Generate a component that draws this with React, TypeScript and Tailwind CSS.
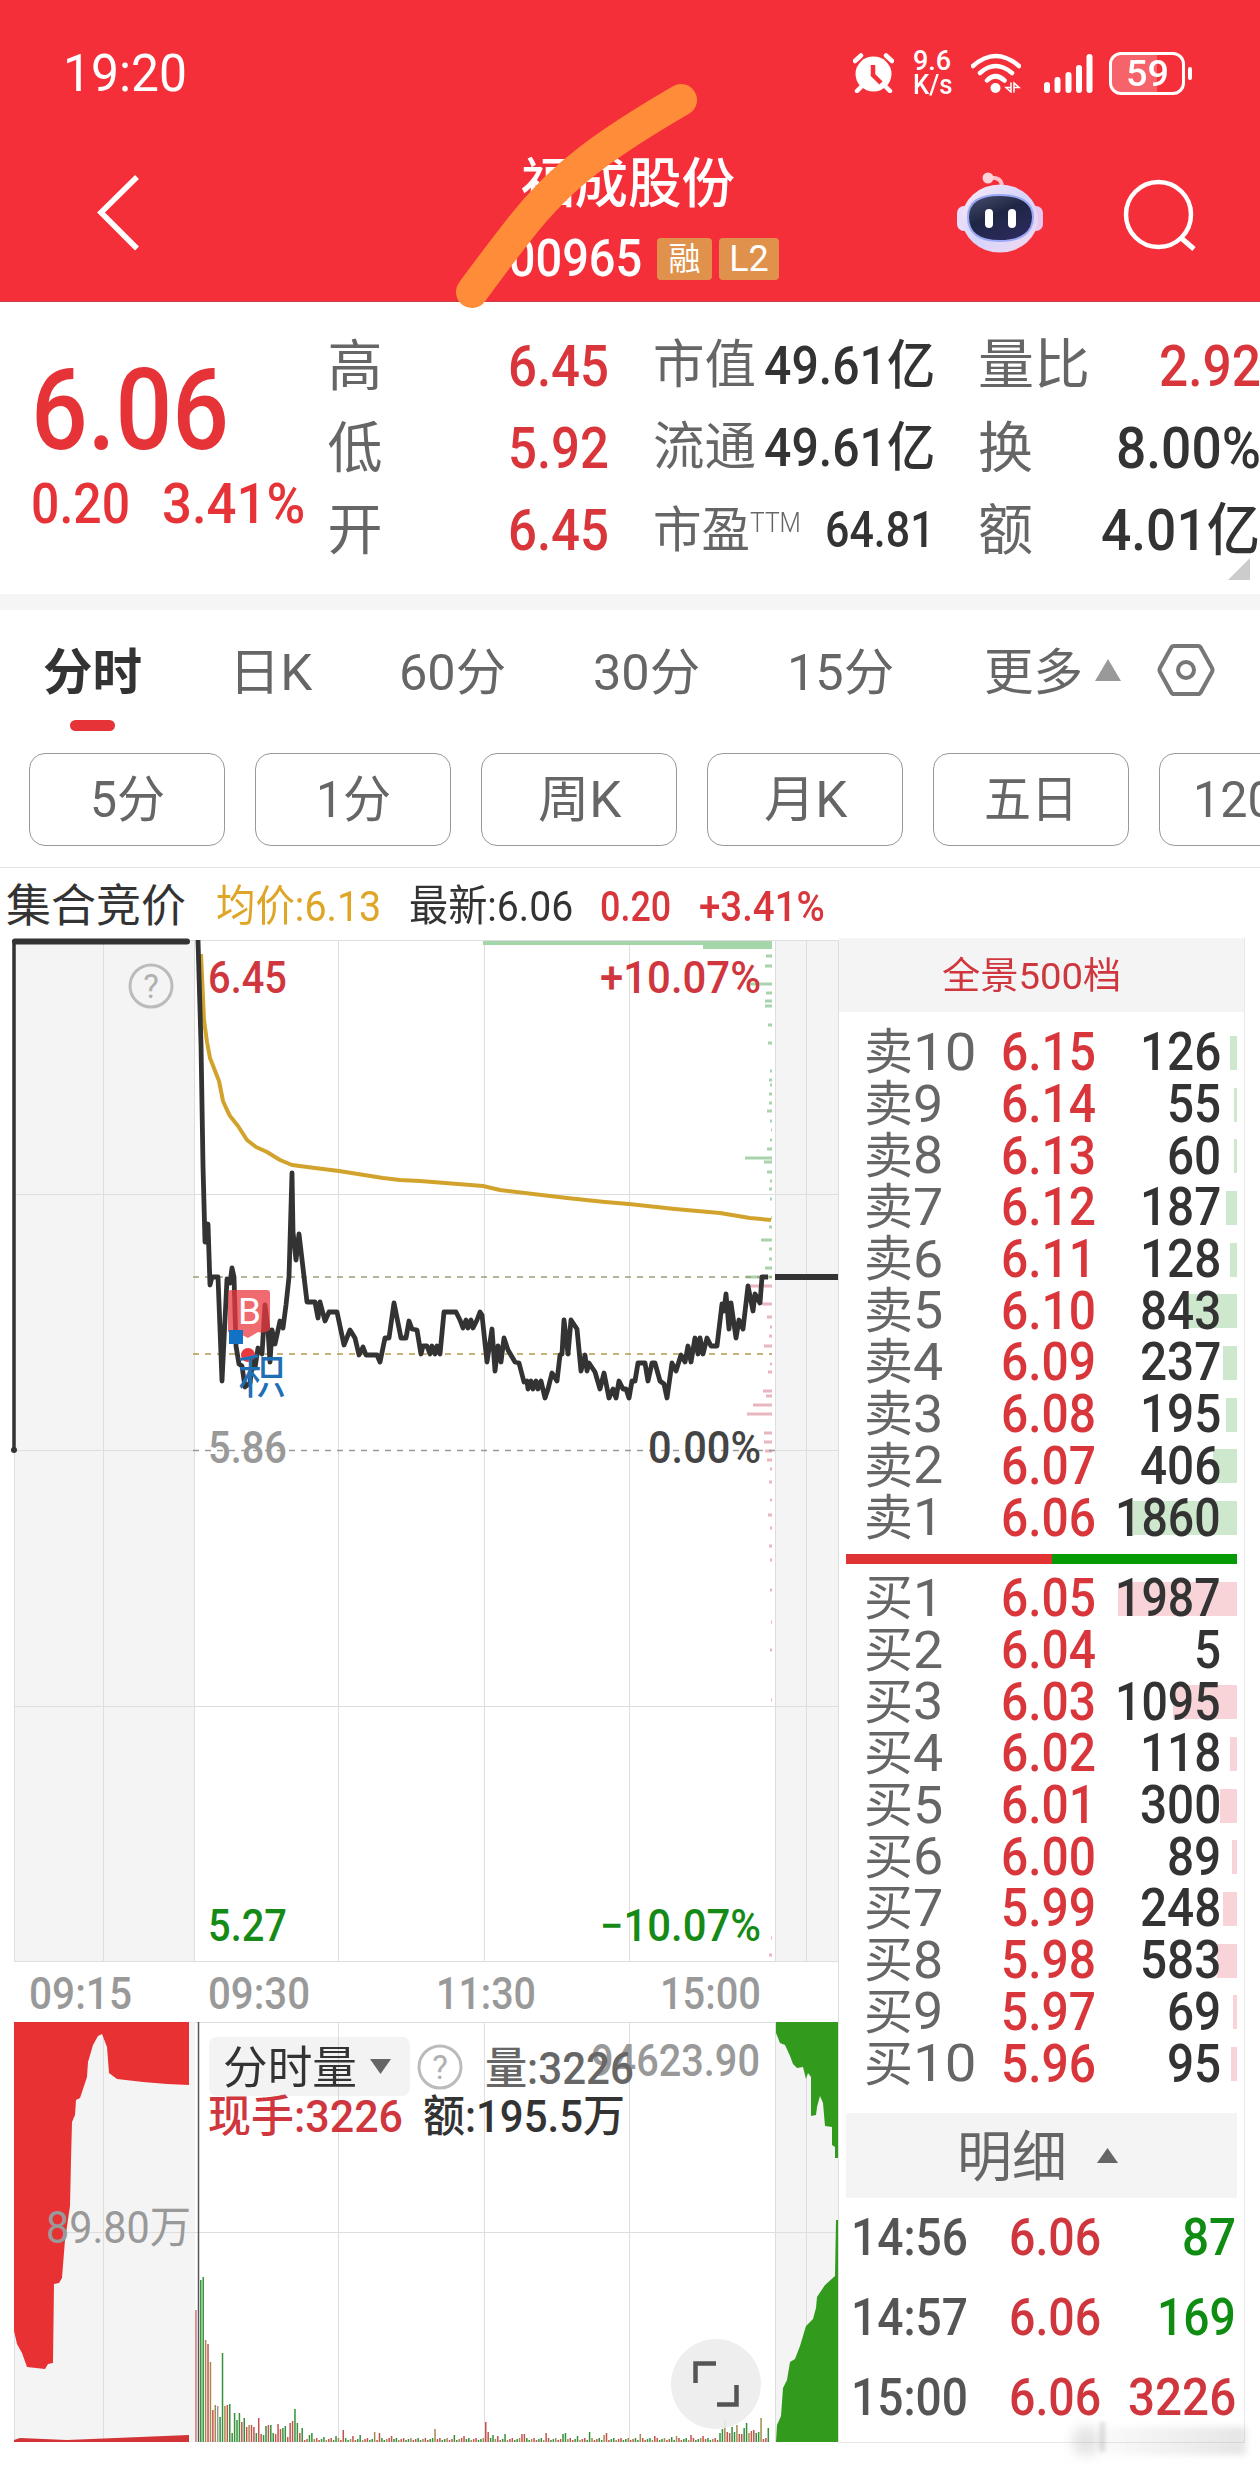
import React, { useLayoutEffect, useRef, useState } from 'react';

// Squeezes a single line of text horizontally so that it fills its box.
function Fit({ className = '', children }: { className?: string; children: React.ReactNode }) {
  const box = useRef<HTMLDivElement>(null);
  const inner = useRef<HTMLSpanElement>(null);
  const [scale, setScale] = useState(1);

  useLayoutEffect(() => {
    if (box.current && inner.current) {
      setScale(box.current.clientWidth / inner.current.offsetWidth);
    }
  }, [children]);

  return (
    <div ref={box} className={`shrink-0 whitespace-nowrap ${className}`}>
      <span ref={inner} className="inline-block origin-left" style={{ transform: `scaleX(${scale})` }}>
        {children}
      </span>
    </div>
  );
}

function StatusBar() {
  return (
    <div className="flex h-[146px] items-center pl-[63px]">
      <Fit className="w-[124px] text-[51px] leading-none">19:20</Fit>
      <svg className="ml-[666px] h-[40px] w-[41px]" viewBox="0 0 41 40">
        <ellipse cx="20.5" cy="21" rx="18" ry="17.5" fill="#fff" />
        <path d="M20 12v10l8 8" fill="none" stroke="#f42f39" strokeWidth="4.5" />
        <path d="M2 8l6-5.500M39 8l-6-5.500M8 34l-4 4M33 34l4 4" stroke="#fff" strokeWidth="4.500" strokeLinecap="round" />
      </svg>
      <div className="ml-[19px] text-[27px] font-medium leading-[24px]">
        <Fit className="w-[38px]">9.6</Fit>
        <Fit className="w-[40px]">K/s</Fit>
      </div>
      <svg className="ml-[18px] h-[40px] w-[50px]" viewBox="0 0 50 40" fill="none" stroke="#fff" strokeWidth="4.500" strokeLinecap="round">
        <path d="M2 13Q24.500-7 48 13M9 20Q24.500 6 41 20M16 27.500Q24.500 19 33.500 27.500" />
        <circle cx="24.500" cy="35" r="5" fill="#fff" stroke="none" />
        <path d="M40 30v9l-5-4.500h5M43 39v-9l5 4.500h-5" strokeWidth="1.500" />
      </svg>
      <svg className="ml-[22px] h-[39px] w-[51px]" viewBox="0 0 51 39" stroke="#fff" strokeWidth="6" strokeLinecap="round">
        <path d="M4 31v5M14.500 26v10M25.500 21v15M36 14v22M46.500 3v33" />
      </svg>
      <div className="relative ml-[15px] flex h-[43px] w-[76px] items-center justify-center rounded-[12px] border-[3px] border-white">
        <div className="absolute inset-y-0 left-0 w-[45px] rounded-l-[9px] bg-white/25" />
        <Fit className="relative w-[43px] text-[37px] font-medium leading-none">59</Fit>
      </div>
      <div className="ml-[3px] h-[13px] w-[4px] rounded-full bg-white" />
    </div>
  );
}

function Robot() {
  return (
    <svg className="h-[82px] w-[88px]" viewBox="0 0 88 82">
      <defs>
        <linearGradient id="shell" x1="0" y1="0" x2="1" y2="1">
          <stop offset="0" stopColor="#fbe9f4" />
          <stop offset="0.5" stopColor="#d5d5fb" />
          <stop offset="1" stopColor="#f4d9ee" />
        </linearGradient>
        <linearGradient id="visor" x1="0" y1="0" x2="0.6" y2="1">
          <stop offset="0" stopColor="#4a5170" />
          <stop offset="0.5" stopColor="#1e2644" />
          <stop offset="1" stopColor="#2b2a5c" />
        </linearGradient>
      </defs>
      <path d="M32 6q14-2 14 9" fill="none" stroke="#ffc0cb" strokeWidth="4" />
      <circle cx="32" cy="6" r="5.500" fill="#ffd3da" />
      <rect x="1" y="34" width="14" height="25" rx="7" fill="#e9dcfa" />
      <rect x="73" y="34" width="14" height="25" rx="7" fill="#e9c6ee" />
      <ellipse cx="44" cy="46.500" rx="38" ry="34" fill="url(#shell)" />
      <path d="M12 45C12 30 24 23 44 23S77 30 77 45 66 69 44 69 12 60 12 45Z" fill="url(#visor)" stroke="#9aa8f5" strokeWidth="2" />
      <path d="M33 41v11M56 41v11" stroke="#fff" strokeWidth="8" strokeLinecap="round" />
    </svg>
  );
}

function Header() {
  return (
    <header className="relative h-[302px] border-b border-[#c9404a] bg-[#f42f39] text-white">
      <StatusBar />
      <div className="flex h-[155px] items-start pl-[96px]">
        <svg className="mt-[27px] h-[80px] w-[46px]" viewBox="0 0 46 80">
          <path d="M41 4L5 39.500l36 36" fill="none" stroke="#fff" strokeWidth="5.500" />
        </svg>
        <div className="ml-[342px] w-[296px]">
          <Fit className="ml-[37px] mt-[9px] w-[214px] text-[54px] font-medium leading-[60px]">福成股份</Fit>
          <div className="mt-[18px] flex items-center">
            <Fit className="-ml-[2px] w-[160px] text-[52px] font-medium leading-[52px]">600965</Fit>
            <div className="ml-[15px] flex h-[42px] w-[55px] items-center justify-center rounded-[4px] bg-[#e0924d] text-[32px] leading-none">融</div>
            <div className="ml-[7px] flex h-[42px] w-[60px] items-center justify-center rounded-[4px] bg-[#e0924d] text-[36px] leading-none">L2</div>
          </div>
        </div>
        <div className="ml-[176px] mt-[26px]">
          <Robot />
        </div>
        <svg className="ml-[78px] mt-[31px] h-[76px] w-[76px]" viewBox="0 0 76 76" fill="none" stroke="#fff" strokeWidth="4.500">
          <ellipse cx="36.500" cy="37.500" rx="32.500" ry="32.500" />
          <path d="M58 60l14 12" strokeWidth="5" />
        </svg>
      </div>
      <svg className="absolute left-[440px] top-[70px] h-[250px] w-[280px]" viewBox="440 70 280 250">
        <path d="M472 292C488 270 500 254 518 231C538 205 562 180 590 159C620 136 650 118 681 100" fill="none" stroke="#ff8c38" strokeWidth="32" strokeLinecap="round" />
      </svg>
    </header>
  );
}

function Quote() {
  return (
    <section className="relative flex h-[292px] text-[#333]">
      <div className="w-[328px] pl-[31px] pt-[55px] font-medium text-[#e53338]">
        <Fit className="w-[198px] text-[113px] leading-[108px]">6.06</Fit>
        <div className="mt-[11px] flex text-[56px] leading-[56px]">
          <Fit className="w-[99px]">0.20</Fit>
          <Fit className="ml-[32px] w-[143px]">3.41%</Fit>
        </div>
      </div>
      <div className="w-[282px] pt-[23px]">
        {[['高', '6.45'], ['低', '5.92'], ['开', '6.45']].map(([label, value]) => (
          <div key={label} className="flex h-[82px] items-center justify-between">
            <span className="text-[55px] leading-none text-[#666]">{label}</span>
            <Fit className="w-[101px] text-[57px] font-medium leading-none text-[#d9363c]">{value}</Fit>
          </div>
        ))}
      </div>
      <div className="ml-[44px] w-[282px] pt-[23px]">
        {[['市值', '49.61亿'], ['流通', '49.61亿']].map(([label, value]) => (
          <div key={label} className="flex h-[82px] items-center justify-between">
            <Fit className="w-[103px] text-[52px] leading-none text-[#666]">{label}</Fit>
            <Fit className="w-[171px] text-[53px] font-medium leading-none">{value}</Fit>
          </div>
        ))}
        <div className="flex h-[82px] items-center">
          <Fit className="w-[97px] text-[49px] leading-none text-[#666]">市盈</Fit>
          <Fit className="-mt-[14px] w-[51px] text-[27px] font-light leading-none text-[#666]">TTM</Fit>
          <Fit className="ml-[24px] w-[110px] text-[50px] font-medium leading-none">64.81</Fit>
        </div>
      </div>
      <div className="ml-[43px] w-[282px] pt-[23px]">
        <div className="flex h-[82px] items-center">
          <Fit className="w-[112px] text-[54px] leading-none text-[#666]">量比</Fit>
          <Fit className="ml-[69px] w-[102px] text-[57px] font-medium leading-none text-[#d9363c]">2.92</Fit>
        </div>
        <div className="flex h-[82px] items-center">
          <Fit className="w-[55px] text-[55px] leading-none text-[#666]">换</Fit>
          <Fit className="ml-[83px] w-[145px] text-[57px] font-medium leading-none">8.00%</Fit>
        </div>
        <div className="flex h-[82px] items-center">
          <Fit className="w-[55px] text-[55px] leading-none text-[#666]">额</Fit>
          <Fit className="ml-[68px] w-[159px] text-[57px] font-medium leading-none">4.01亿</Fit>
        </div>
      </div>
      <svg className="absolute right-[10px] top-[256px] h-[22px] w-[22px]" viewBox="0 0 22 22">
        <path d="M22 0v22H0z" fill="#ccc" />
      </svg>
    </section>
  );
}

const tabs = [
  { name: '日K', box: 'ml-[87px] w-[83px]' },
  { name: '60分', box: 'ml-[87px] w-[107px]' },
  { name: '30分', box: 'ml-[87px] w-[107px]' },
  { name: '15分', box: 'ml-[87px] w-[107px]' },
  { name: '更多', box: 'ml-[90px] w-[99px]' },
];

const periods = [
  { name: '5分', box: 'w-[75px]' },
  { name: '1分', box: 'w-[75px]' },
  { name: '周K', box: 'w-[83px]' },
  { name: '月K', box: 'w-[83px]' },
  { name: '五日', box: 'w-[94px]' },
];

function Tabs() {
  return (
    <nav className="h-[258px] border-b border-[#e3e3e3] text-[#666]">
      <div className="relative flex h-[122px] items-center pl-[43px] pt-[4px] text-[50px] leading-none">
        <Fit className="w-[99px] font-bold text-[#333]">分时</Fit>
        {tabs.map((tab) => (
          <Fit key={tab.name} className={tab.box}>{tab.name}</Fit>
        ))}
        <svg className="ml-[12px] h-[22px] w-[26px] -translate-y-[3px]" viewBox="0 0 26 22">
          <path d="M13 0l13 22H0z" fill="#999" />
        </svg>
        <svg className="ml-[36px] h-[54px] w-[58px] -translate-y-[3px]" viewBox="0 0 58 54" fill="none" stroke="#777" strokeWidth="4">
          <path d="M17 3h24q2 0 3 2l11 20q1 2 0 4L44 49q-1 2-3 2H17q-2 0-3-2L3 29q-1-2 0-4L14 5q1-2 3-2z" />
          <circle cx="29" cy="27" r="8" />
        </svg>
        <div className="absolute left-[70px] top-[110px] h-[11px] w-[45px] rounded-full bg-[#e53338]" />
      </div>
      <div className="mt-[21px] flex gap-[30px] pl-[29px] text-[50px] leading-none">
        {periods.map((p) => (
          <div key={p.name} className="flex h-[93px] w-[196px] shrink-0 items-center justify-center rounded-[16px] border border-[#999]">
            <Fit className={p.box}>{p.name}</Fit>
          </div>
        ))}
        <div className="flex h-[93px] w-[196px] shrink-0 items-center rounded-[16px] border border-[#999] pl-[33px]">
          <Fit className="w-[130px]">120分</Fit>
        </div>
      </div>
    </nav>
  );
}

function InfoRow() {
  return (
    <div className="flex h-[70px] items-center pl-[6px] pt-[6px] text-[43px] font-medium leading-none text-[#333]">
      <Fit className="w-[180px] text-[45px] font-normal">集合竞价</Fit>
      <Fit className="ml-[30px] w-[165px] font-normal text-[#dfa526]">均价:6.13</Fit>
      <Fit className="ml-[28px] w-[164px] font-normal">最新:6.06</Fit>
      <Fit className="ml-[27px] w-[71px] text-[#d9363c]">0.20</Fit>
      <Fit className="ml-[28px] w-[126px] text-[#d9363c]">+3.41%</Fit>
    </div>
  );
}

const price =
  '198,940 201,1044 203,1166 205,1242 208,1224 210,1285 212,1277 218,1277 222,1381 227,1279 230,1283 232,1268 234,1277 236,1346 239,1364 242,1366 245,1387 250,1383 253,1358 255,1368 258,1348 262,1354 265,1305 268,1330 270,1362 272,1330 275,1344 280,1321 283,1328 286,1305 289,1277 292,1173 293,1232 296,1260 299,1234 303,1268 307,1302 315,1302 318,1318 320,1302 325,1321 329,1312 337,1312 344,1345 350,1330 355,1338 359,1355 363,1347 366,1355 377,1355 380,1362 385,1338 389,1338 394,1303 401,1338 406,1338 409,1321 412,1329 417,1330 421,1354 423,1346 427,1346 430,1354 432,1346 435,1354 437,1346 440,1354 444,1312 456,1312 460,1320 463,1328 466,1320 468,1328 471,1320 473,1328 477,1320 480,1312 482,1315 487,1362 492,1329 495,1371 498,1346 501,1362 504,1338 508,1350 515,1362 519,1363 524,1382 527,1381 528,1389 531,1381 533,1389 536,1381 538,1389 541,1381 545,1398 548,1389 552,1373 557,1381 560,1355 562,1354 564,1320 568,1354 571,1320 577,1329 581,1371 585,1355 587,1371 589,1363 595,1372 600,1389 604,1373 609,1398 613,1389 616,1398 619,1381 623,1389 626,1389 629,1398 632,1381 635,1381 638,1363 645,1363 648,1381 652,1363 655,1363 660,1381 664,1384 667,1398 672,1363 676,1371 681,1355 685,1362 688,1346 691,1362 695,1338 698,1354 700,1338 703,1354 707,1338 711,1346 717,1346 722,1304 724,1311 726,1294 729,1329 731,1303 736,1338 739,1320 743,1329 748,1286 753,1311 755,1294 760,1303 762,1277 768,1277';

const average =
  '201,954 204,1020 207,1042 210,1058 219,1081 223,1101 227,1110 230,1116 238,1126 247,1140 256,1147 267,1152 280,1160 292,1165 315,1168 339,1171 383,1178 400,1180 420,1181 483,1186 500,1190 567,1198 605,1202 629,1204 675,1209 720,1213 750,1218 771,1220';

// [y, width] of the pending orders along the right edge
const asks = [
  [956, 6], [966, 7], [984, 24], [993, 6], [1001, 7], [1006, 7], [1025, 4], [1043, 4], [1071, 2], [1080, 3], [1085, 2],
  [1094, 3], [1103, 3], [1111, 5], [1121, 2], [1130, 1], [1140, 2], [1149, 5], [1158, 27], [1162, 8], [1172, 5],
  [1181, 2], [1189, 3], [1199, 2], [1218, 1], [1227, 3], [1240, 11], [1249, 3], [1259, 3], [1268, 7], [1277, 26],
];
const bids = [
  [1286, 22], [1304, 10], [1317, 5], [1327, 2], [1336, 3], [1346, 8], [1364, 2], [1372, 4], [1391, 9], [1396, 6],
  [1405, 19], [1414, 25], [1433, 8], [1442, 8], [1451, 7], [1460, 5], [1469, 2], [1482, 3], [1500, 2], [1515, 4],
  [1528, 2], [1546, 3], [1560, 2], [1590, 2], [1622, 1], [1650, 2], [1700, 1], [1938, 1], [1955, 3],
];

const r = '#c4534f';
const g = '#35923a';
const o = '#a58a4c';

// [height, colour] of the opening minutes
const opening: [number, string][] = [
  [132, '#c9777a'], [0, r], [162, g], [165, g], [102, o], [98, r], [80, o], [32, r], [37, o], [36, '#999'], [25, g], [89, g],
  [36, o], [37, r], [38, g], [9, g], [29, g], [22, g], [29, g], [20, r], [24, g], [15, r], [17, o], [17, r], [15, r],
  [9, g], [24, r], [8, r], [7, g], [16, g], [17, r], [17, g], [9, g], [8, r], [18, r], [13, r], [14, g], [16, g], [5, r],
  [19, r], [21, r], [33, g], [19, g], [9, r], [14, g],
];

const spikes: Record<number, number> = {
  47: 7, 48: 9, 53: 5, 58: 6, 61: 12, 65: 6, 68: 7, 74: 10, 76: 9, 81: 6, 99: 13, 107: 7, 111: 6, 120: 20, 121: 10, 123: 7,
  125: 6, 128: 8, 135: 8, 136: 8, 145: 9, 152: 8, 153: 9, 158: 6, 163: 10, 169: 7, 170: 9, 184: 8, 190: 6, 197: 5, 199: 6,
  205: 7, 210: 6, 217: 9, 218: 13, 219: 22, 220: 10, 221: 9, 222: 15, 223: 10, 224: 17, 225: 8, 226: 8, 227: 14, 228: 19,
  229: 9, 230: 11, 231: 12, 232: 9, 233: 10, 234: 24, 237: 14,
};

function volumeBar(i: number): [number, string] {
  if (i < opening.length) return opening[i];
  const height = spikes[i] ?? 2 + ((i * 7) % 3);
  return [height, [r, g, o, r, g][(i * 3) % 5]];
}

function Help({ x, y }: { x: number; y: number }) {
  return (
    <g>
      <circle cx={x} cy={y} r="21" fill="none" stroke="#bbb" strokeWidth="3" />
      <text x={x} y={y + 12} textAnchor="middle" fontSize="33" fill="#b0b0b0">?</text>
    </g>
  );
}

function Label({ x, y, w, fill, size = 44, weight = 500, children }: {
  x: number; y: number; w: number; fill: string; size?: number; weight?: number; children: string;
}) {
  return (
    <text x={x} y={y} textLength={w} lengthAdjust="spacingAndGlyphs" fontSize={size} fontWeight={weight} fill={fill}>
      {children}
    </text>
  );
}

function Chart() {
  return (
    <div className="relative h-[1536px] w-[839px] shrink-0">
      <svg className="block h-[1536px] w-[839px]" viewBox="0 938 839 1536">
        {/* panels and grid */}
        <path d="M14 940h181v1021H14zM775 940h63v1021h-63zM14 2022h181v420H14zM775 2022h63v420h-63z" fill="#f4f4f4" />
        <g stroke="#dedede" strokeWidth="1">
          <path d="M14 940.500H838M14 1194.500H838M14 1450.500H195M775 1450.500H838M14 1706.500H838M14 1961.500H838" />
          <path d="M103.500 940V1961M338.500 940V1961M484.500 940V1961M629.500 940V1961M775.500 940V1961M806.500 940V1961M838.500 940V2442M14.500 1450V1961M194.500 940V1961" />
          <path d="M195 2022.500H775M14 2232.500H838M103.500 2022V2442M338.500 2022V2442M484.500 2022V2442M629.500 2022V2442M775.500 2022V2442M806.500 2022V2442M14.500 2022V2442M838 2443H839" />
        </g>

        {/* auction session */}
        <path d="M14 1450V942H188" fill="none" stroke="#333" strokeWidth="3.500" />
        <path d="M15 941.500H187" stroke="#333" strokeWidth="6" strokeLinecap="round" />
        <circle cx="14" cy="1450" r="3" fill="#333" />
        <Help x={151} y={986} />

        {/* pending orders */}
        <path d="M483 941H772V949H703V945H483z" fill="#a3d6a8" />
        {asks.map(([y, w]) => (
          <rect key={y} x={772 - w} y={y - 1.500} width={w} height="3" fill="#a9d3ac" />
        ))}
        {bids.map(([y, w]) => (
          <rect key={y} x={772 - w} y={y - 1.500} width={w} height="3" fill="#e9b6bd" />
        ))}

        <g strokeDasharray="6 6" strokeWidth="1.500">
          <path d="M193 1277H772" stroke="#9aa07a" />
          <path d="M193 1354H772" stroke="#b39a4c" />
          <path d="M193 1450.500H775" stroke="#999" />
        </g>

        <Label x={208} y={993} w={79} fill="#cf363d">6.45</Label>
        <Label x={600} y={993} w={161} fill="#cf363d">+10.07%</Label>
        <Label x={208} y={1463} w={79} fill="#999">5.86</Label>
        <Label x={648} y={1463} w={113} fill="#444">0.00%</Label>
        <Label x={208} y={1941} w={79} fill="#168a16">5.27</Label>
        <Label x={600} y={1941} w={161} fill="#168a16">−10.07%</Label>
        <Label x={29} y={2009} w={103} fill="#999">09:15</Label>
        <Label x={208} y={2009} w={102} fill="#999">09:30</Label>
        <Label x={436} y={2009} w={100} fill="#999">11:30</Label>
        <Label x={660} y={2009} w={101} fill="#999">15:00</Label>

        <polyline points={average} fill="none" stroke="#d2a32c" strokeWidth="4" strokeLinejoin="round" />
        <polyline points={price} fill="none" stroke="#333" strokeWidth="4.800" strokeLinejoin="round" />
        <path d="M775 1277H838" stroke="#333" strokeWidth="6" />

        {/* trade markers */}
        <path d="M230 1290H267q3 0 3 3V1330q-6 4-12 2l-10 6-10-5-10-1V1293q0-3 3-3z" fill="#ea3a40" fillOpacity="0.75" />
        <path d="M240 1335l8 4 12-6v7q-13 3-16 11l-3-2z" fill="#fff" />
        <circle cx="248" cy="1355" r="7" fill="#e8393f" />
        <Label x={238} y={1324} w={23} size={37} weight={400} fill="#fff">B</Label>
        <rect x="229" y="1330" width="14" height="14" fill="#1272c6" />
        <Label x={238} y={1393} w={48} size={47} weight={400} fill="#1f6fb5">积</Label>

        {/* auction volume */}
        <path d="M14 2022H189V2085L167 2084 143 2082 117 2079 109 2073 107 2047 102 2034 98 2036 93 2045 88 2062 87 2077 80 2098 76 2100 75 2115 72 2122 71 2160 70 2206 65 2240 62 2278 59 2283 54 2284 53 2363 48 2364 45 2369 27 2367 22 2353 17 2344 14 2331z" fill="#e83132" />
        <path d="M14 2442V2440L20 2438 67 2440 189 2435V2442z" fill="#d23336" />
        <path d="M776 2022H838V2158H835V2147L832 2145V2127L825 2126 823 2103 820 2096 817 2107 816 2115 811 2116V2077L808 2073 806 2079 803 2067 797 2068 793 2064 790 2056 785 2045 780 2043 776 2033z" fill="#329b1d" />
        <path d="M836 2220H838V2442H776L777 2425 781 2416 783 2388 787 2380 790 2362 795 2359 800 2346 806 2326 813 2319 816 2308 817 2297 825 2285 835 2276z" fill="#329b1d" />
        <Label x={46} y={2243} w={145} weight={400} fill="#999">89.80万</Label>

        {/* minute volume */}
        {Array.from({ length: 238 }, (_, i) => {
          const [height, colour] = volumeBar(i);
          return <rect key={i} x={195.200 + i * 2.415} y={2442 - height} width="1.500" height={height} fill={colour} />;
        })}
        <path d="M198.500 2022V2442" stroke="#555" strokeWidth="1.500" />

        <Label x={591} y={2076} w={169} fill="#999">94623.90</Label>
        <Label x={485} y={2084} w={149} fill="#666">量:3226</Label>
        <Help x={440} y={2067} />
        <Label x={208} y={2132} w={195} fill="#cf363d">现手:3226</Label>
        <Label x={423} y={2132} w={202} fill="#333">额:195.5万</Label>
      </svg>
      <div className="absolute left-[209px] top-[1099px] flex h-[59px] w-[201px] items-center rounded-[8px] bg-[#999]/12 pl-[14px] pt-[3px] text-[#333]">
        <Fit className="w-[134px] text-[45px] leading-none">分时量</Fit>
        <svg className="ml-[13px] h-[15px] w-[21px] -translate-y-[2px]" viewBox="0 0 21 15">
          <path d="M0 0h21L10.500 15z" fill="#666" />
        </svg>
      </div>
      <div className="absolute left-[671px] top-[1401px] flex size-[90px] items-center justify-center rounded-full bg-[#ececec]/90">
        <svg className="h-[46px] w-[46px]" viewBox="0 0 46 46" fill="none" stroke="#555" strokeWidth="4.500">
          <path d="M2.500 22V2.500H23M43.500 24V43.500H24" />
        </svg>
      </div>
    </div>
  );
}

// [level, price, volume, bar width]
const sells: [string, string, number, number][] = [
  ['10', '6.15', 126, 7], ['9', '6.14', 55, 3], ['8', '6.13', 60, 3], ['7', '6.12', 187, 11], ['6', '6.11', 128, 7],
  ['5', '6.10', 843, 48], ['4', '6.09', 237, 14], ['3', '6.08', 195, 11], ['2', '6.07', 406, 24], ['1', '6.06', 1860, 104],
];
const buys: [string, string, number, number][] = [
  ['1', '6.05', 1987, 119], ['2', '6.04', 5, 0], ['3', '6.03', 1095, 64], ['4', '6.02', 118, 7], ['5', '6.01', 300, 17],
  ['6', '6.00', 89, 5], ['7', '5.99', 248, 14], ['8', '5.98', 583, 20], ['9', '5.97', 69, 4], ['10', '5.96', 95, 6],
];
const volumeBox = ['', 'w-[27px]', 'w-[54px]', 'w-[81px]', 'w-[106px]'];

function BookRow({ side, row, bar }: { side: string; row: [string, string, number, number]; bar: string }) {
  const [level, value, volume, width] = row;
  return (
    <div className="relative flex h-[51.700px] items-center pl-[25px] text-[53px] leading-none">
      <div className={`absolute right-[7px] h-[34px] ${bar}`} style={{ width }} />
      <span className="w-[49px] text-[49px] text-[#666]">{side}</span>
      <Fit className={`text-[52px] text-[#666] ${level.length > 1 ? 'mr-[25px] w-[63px]' : 'mr-[58px] w-[30px]'}`}>{level}</Fit>
      <Fit className="w-[95px] font-medium text-[#d9363c]">{value}</Fit>
      <div className="relative flex grow justify-end pr-[23px] font-medium text-[#333]">
        <Fit className={volumeBox[String(volume).length]}>{volume}</Fit>
      </div>
    </div>
  );
}

const trades = [
  { time: '14:56', volume: '87', box: 'w-[54px] text-[#0f8c12]' },
  { time: '14:57', volume: '169', box: 'w-[79px] text-[#0f8c12]' },
  { time: '15:00', volume: '3226', box: 'w-[108px] text-[#cf363d]' },
];

function OrderBook() {
  return (
    <aside className="relative h-[1505px] w-[406px] shrink-0 border-b border-r border-[#e8e8e8]">
      <div className="flex h-[74px] items-center justify-center bg-[#f4f4f4] pt-[2px] text-[37px] leading-none text-[#cf363d]">
        <Fit className="-ml-[20px] w-[179px]">全景500档</Fit>
      </div>
      <div className="h-[542px] pt-[15px]">
        {sells.map((row) => (
          <BookRow key={row[1]} side="卖" row={row} bar="bg-[#cde8cd]" />
        ))}
      </div>
      <div className="ml-[7px] mr-[7px] flex h-[10px]">
        <div className="w-[206px] bg-[#e03333]" />
        <div className="grow bg-[#079a07]" />
      </div>
      <div className="h-[549px] pt-[9px]">
        {buys.map((row) => (
          <BookRow key={row[1]} side="买" row={row} bar="bg-[#f8d4d8]" />
        ))}
      </div>
      <div className="mx-[7px] flex h-[85px] items-center bg-[#f4f4f4] pl-[111px] text-[55px] leading-none text-[#666]">
        <Fit className="w-[110px] pt-[3px]">明细</Fit>
        <svg className="ml-[30px] h-[15px] w-[21px]" viewBox="0 0 21 15">
          <path d="M10.500 0L21 15H0z" fill="#666" />
        </svg>
      </div>
      {trades.map((t) => (
        <div key={t.time} className="flex h-[80px] items-center pl-[12px] text-[52px] font-medium leading-none">
          <Fit className="w-[117px] text-[#555]">{t.time}</Fit>
          <Fit className="ml-[41px] w-[92px] text-[#cf363d]">6.06</Fit>
          <div className="flex grow justify-end pr-[8px]">
            <Fit className={t.box}>{t.volume}</Fit>
          </div>
        </div>
      ))}
      <div className="absolute -right-[2px] top-[1485px] flex h-[36px] w-[174px] items-center">
        <div className="h-[30px] w-[28px] rounded-full bg-[#999]/25 blur-[6px]" />
        <div className="h-[30px] w-[5px] -translate-y-[4px] bg-[#888]/30 blur-[2px]" />
        <div className="h-[28px] grow bg-gradient-to-r from-[#999]/5 to-[#999]/25 blur-[3px]" />
      </div>
    </aside>
  );
}

export default function App() {
  return (
    <main className="h-[2474px] w-[1260px] overflow-hidden bg-white font-['Roboto','Noto_Sans_CJK_SC',sans-serif]">
      <Header />
      <Quote />
      <div className="h-[16px] bg-[#f5f5f5]" />
      <Tabs />
      <InfoRow />
      <div className="flex">
        <Chart />
        <OrderBook />
      </div>
    </main>
  );
}
